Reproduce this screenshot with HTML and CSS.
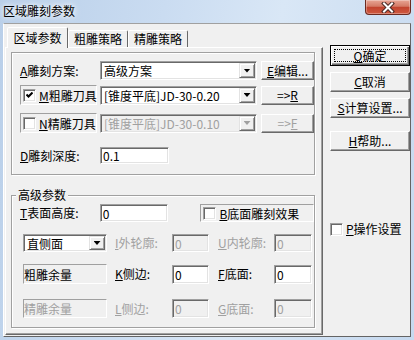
FILE: index.html
```html
<!DOCTYPE html>
<html lang="zh-CN">
<head>
  <meta charset="UTF-8">
  <title>区域雕刻参数</title>
  <link rel="stylesheet" href="styles.css">
</head>
<body>
  <div class="window">
    <div class="titlebar">
      <span class="title">区域雕刻参数</span>
      <div class="close-btn">
        <svg width="14" height="11" viewBox="0 0 14 11">
          <path d="M3 1.5 L11 9.5 M11 1.5 L3 9.5" stroke="#4a2a26" stroke-width="4" stroke-linecap="square"/>
          <path d="M3 1.5 L11 9.5 M11 1.5 L3 9.5" stroke="#fff" stroke-width="2" stroke-linecap="square"/>
        </svg>
      </div>
    </div>

    <div class="client">
      <div class="tab-area">
        <div class="tabs">
          <div class="tab active">区域参数</div>
          <div class="tab">粗雕策略</div>
          <div class="tab">精雕策略</div>
        </div>

        <div class="tab-panel">
          <div class="group group-main">
            <div class="row row-1">
              <label class="field-label"><u>A</u>雕刻方案:</label>
              <div class="combo wide"><span class="combo-text">高级方案</span><span class="combo-arrow"></span></div>
              <div class="btn btn-small"><u>E</u>编辑...</div>
            </div>
            <div class="row row-2">
              <div class="check-frame tool-frame">
                <span class="checkbox checked">
                  <svg width="7" height="7" viewBox="0 0 7 7"><polyline points="0.5,2.5 2.5,4.5 6.5,0.5" fill="none" stroke="#000" stroke-width="2"/></svg>
                </span>
                <span><u>M</u>粗雕刀具</span>
              </div>
              <div class="combo wide"><span class="combo-text">[锥度平底]JD-30-0.20</span><span class="combo-arrow"></span></div>
              <div class="btn btn-small">=&gt;<u>R</u></div>
            </div>
            <div class="row row-3">
              <div class="check-frame tool-frame">
                <span class="checkbox"></span>
                <span><u>N</u>精雕刀具</span>
              </div>
              <div class="combo wide disabled"><span class="combo-text">[锥度平底]JD-30-0.10</span><span class="combo-arrow"></span></div>
              <div class="btn btn-small disabled">=&gt;<u>F</u></div>
            </div>
            <div class="row row-4">
              <label class="field-label"><u>D</u>雕刻深度:</label>
              <div class="edit edit-long">0.1</div>
            </div>
          </div>

          <div class="group group-adv">
            <div class="group-caption">高级参数</div>
            <div class="row row-a">
              <label class="field-label"><u>T</u>表面高度:</label>
              <div class="edit edit-long">0</div>
              <div class="check-frame bottom-frame">
                <span class="checkbox"></span>
                <span><u>B</u>底面雕刻效果</span>
              </div>
            </div>
            <div class="row grid-row row-b">
              <div class="combo side-combo"><span class="combo-text">直侧面</span><span class="combo-arrow"></span></div>
              <label class="small-label disabled"><u>I</u>外轮廓:</label>
              <div class="edit edit-short disabled">0</div>
              <label class="small-label disabled"><u>U</u>内轮廓:</label>
              <div class="edit edit-short disabled">0</div>
            </div>
            <div class="row grid-row row-c">
              <div class="static-box">粗雕余量</div>
              <label class="small-label"><u>K</u>侧边:</label>
              <div class="edit edit-short">0</div>
              <label class="small-label"><u>F</u>底面:</label>
              <div class="edit edit-short">0</div>
            </div>
            <div class="row grid-row row-d">
              <div class="static-box disabled">精雕余量</div>
              <label class="small-label disabled"><u>L</u>侧边:</label>
              <div class="edit edit-short disabled">0</div>
              <label class="small-label disabled"><u>G</u>底面:</label>
              <div class="edit edit-short disabled">0</div>
            </div>
          </div>
        </div>
      </div>

      <div class="side">
        <div class="btn btn-cmd btn-default"><u>O</u>确定</div>
        <div class="btn btn-cmd btn-cancel"><u>C</u>取消</div>
        <div class="btn btn-cmd btn-calc"><u>S</u>计算设置...</div>
        <div class="btn btn-cmd btn-help"><u>H</u>帮助...</div>
        <div class="side-check">
          <span class="checkbox"></span>
          <span><u>P</u>操作设置</span>
        </div>
      </div>
    </div>
  </div>
</body>
</html>
```

FILE: styles.css
```css
:root {
  --face: #f0f0f0;
  --light: #e3e3e3;
  --shadow: #a0a0a0;
  --dark: #696969;
  --gray-text: #a0a0a0;
}

* {
  box-sizing: border-box;
}

body {
  margin: 0;
  font-family: "Noto Sans CJK SC", sans-serif;
  font-size: 12px;
  color: #000;
  background: #c4d8ee;
}

u {
  text-decoration: underline;
  text-underline-offset: 1px;
}

.window {
  width: 414px;
  height: 340px;
  display: flex;
  flex-direction: column;
  background: linear-gradient(100deg, #b9cfe9 0%, #cadcf1 35%, #d9e7f6 60%, #c6d9ef 100%);
}

/* title bar */
.titlebar {
  height: 23px;
  display: flex;
  justify-content: space-between;
  align-items: flex-start;
  padding-left: 3px;
}

.title {
  margin-top: 4px;
  line-height: 14px;
  text-shadow: 0 0 4px #fff, 0 0 8px #fff;
}

.close-btn {
  width: 46px;
  height: 15px;
  margin-right: 3px;
  border: 1px solid #6b2a20;
  border-top: none;
  border-radius: 0 0 4px 4px;
  background: linear-gradient(#e8a595, #d47a66 45%, #c2432f 52%, #cf5a40 100%);
  box-shadow: inset 0 0 0 1px rgba(255, 255, 255, 0.3);
  display: flex;
  align-items: center;
  justify-content: center;
}

/* client area */
.client {
  flex: 1;
  margin: 0 3px 3px;
  background: var(--face);
  border: 1px solid;
  border-color: #a0a0a0 #646464 #646464 #fff;
  display: flex;
  gap: 7px;
  padding: 3px 0 0 1px;
}

.tab-area {
  width: 318px;
  display: flex;
  flex-direction: column;
}

.tabs {
  height: 20px;
  display: flex;
  align-items: flex-end;
  padding-left: 2px;
}

.tab {
  width: 59px;
  height: 17px;
  border: 1px solid;
  border-bottom: none;
  border-color: #fff var(--dark) transparent #fff;
  border-radius: 2px 2px 0 0;
  text-align: center;
  line-height: 15px;
  white-space: nowrap;
}

.tab + .tab {
  width: 60px;
}

.tab.active {
  width: 61px;
  height: 21px;
  margin-bottom: -1px;
  line-height: 20px;
  background: var(--face);
  position: relative;
  z-index: 1;
}

.tab-panel {
  flex: 1;
  margin-bottom: 1px;
  border: 1px solid;
  border-color: #fff var(--dark) var(--dark) #fff;
  box-shadow: inset -1px -1px var(--shadow);
  padding: 4px 0 0 5px;
}

/* group boxes */
.group {
  width: 304px;
  border: 1px solid var(--shadow);
  box-shadow: inset 1px 1px #fff, 1px 1px #fff;
  padding-left: 8px;
}

.group-main {
  height: 123px;
  padding-top: 8px;
}

.group-adv {
  height: 133px;
  margin-top: 20px;
}

.group-caption {
  width: fit-content;
  margin: -8px 0 0 -4px;
  padding: 0 2px;
  line-height: 14px;
  background: var(--face);
}

.row {
  display: flex;
  align-items: center;
  white-space: nowrap;
}

.row-1 { height: 19px; }
.row-2 { height: 20px; margin-top: 5px; }
.row-3 { height: 20px; margin-top: 8px; }
.row-4 { height: 17px; margin-top: 14px; }

.row-a { height: 18px; margin-top: 2px; }
.row-b { height: 18px; margin-top: 12px; }
.row-c { height: 20px; margin-top: 12px; }
.row-d { height: 19px; margin-top: 15px; }

.grid-row {
  padding-left: 3px;
}

.field-label {
  width: 80px;
  line-height: 16px;
}

.small-label {
  width: 57px;
  margin-left: 8px;
  line-height: 16px;
}

.small-label + .edit + .small-label {
  width: 56px;
  margin-left: 9px;
}

.disabled {
  color: var(--gray-text);
}

/* sunken controls */
.edit,
.combo {
  height: 100%;
  background: #fff;
  border: 1px solid;
  border-color: var(--shadow) #fff #fff var(--shadow);
  box-shadow: inset 1px 1px var(--dark), inset -1px -1px var(--light);
}

.edit {
  padding-left: 2px;
  display: flex;
  align-items: center;
}

.edit.disabled {
  background: var(--face);
}

.edit-long { width: 69px; }
.edit-short { width: 37px; }
.edit-short:last-child { width: 38px; }

.combo {
  display: flex;
  align-items: stretch;
  height: 19px;
}

.row-a .edit,
.row-b .edit,
.row-b .combo { height: 18px; }
.row-c .edit,
.row-d .edit { height: 19px; }

.combo.wide { width: 157px; }
.side-combo { width: 84px; }

.combo-text {
  flex: 1;
  padding-left: 3px;
  display: flex;
  align-items: center;
  overflow: hidden;
}

.combo.disabled {
  background: var(--face);
}

.combo-arrow {
  width: 16px;
  margin: 1px 1px 1px 0;
  background: var(--face);
  border: 1px solid;
  border-color: var(--light) var(--dark) var(--dark) var(--light);
  box-shadow: inset 1px 1px #fff, inset -1px -1px var(--shadow);
  display: flex;
  align-items: center;
  justify-content: center;
}

.combo-arrow::after {
  content: "";
  width: 7px;
  height: 4px;
  background: #000;
  clip-path: polygon(0 0, 100% 0, 50% 100%);
}

.combo.disabled .combo-arrow::after {
  background: var(--gray-text);
}

.static-box {
  width: 84px;
  height: 100%;
  border: 1px solid;
  border-color: var(--shadow) #fff #fff var(--shadow);
  display: flex;
  align-items: center;
}

/* checkboxes */
.checkbox {
  width: 13px;
  height: 13px;
  flex: none;
  background: #fff;
  border: 1px solid;
  border-color: var(--shadow) #fff #fff var(--shadow);
  box-shadow: inset 1px 1px var(--dark), inset -1px -1px var(--light);
  display: flex;
  align-items: center;
  justify-content: center;
}

.check-frame {
  height: 100%;
  display: flex;
  align-items: center;
  gap: 3px;
  padding-left: 2px;
  background: var(--face);
  border: 1px solid;
  border-color: var(--shadow) #fff #fff var(--shadow);
}

.tool-frame {
  width: 77px;
  margin-right: 3px;
}

.bottom-frame {
  width: 114px;
  margin-left: 32px;
  position: relative;
}

/* raised buttons */
.btn {
  background: var(--face);
  border: 1px solid;
  border-color: #fff var(--dark) var(--dark) #fff;
  box-shadow: inset -1px -1px var(--shadow), inset 1px 1px var(--face);
  display: flex;
  align-items: center;
  justify-content: center;
  white-space: nowrap;
  line-height: 14px;
}

.btn.disabled {
  color: var(--gray-text);
}

.btn-small {
  width: 53px;
  height: 19px;
  margin-left: 4px;
}

.side {
  width: 80px;
  display: flex;
  flex-direction: column;
}

.btn-cmd {
  height: 20px;
}

.btn-default {
  height: 21px;
  margin-top: 18px;
  border: 1px solid #000;
  box-shadow: inset 1px 1px #fff, inset -1px -1px var(--dark), inset -2px -2px var(--shadow);
  outline: 1px dotted #000;
  outline-offset: -5px;
}

.btn-cancel { margin-top: 6px; }
.btn-calc { margin-top: 6px; }
.btn-help { margin-top: 13px; }

.side-check {
  margin-top: 71px;
  display: flex;
  align-items: center;
  gap: 3px;
  white-space: nowrap;
  line-height: 14px;
}
```
